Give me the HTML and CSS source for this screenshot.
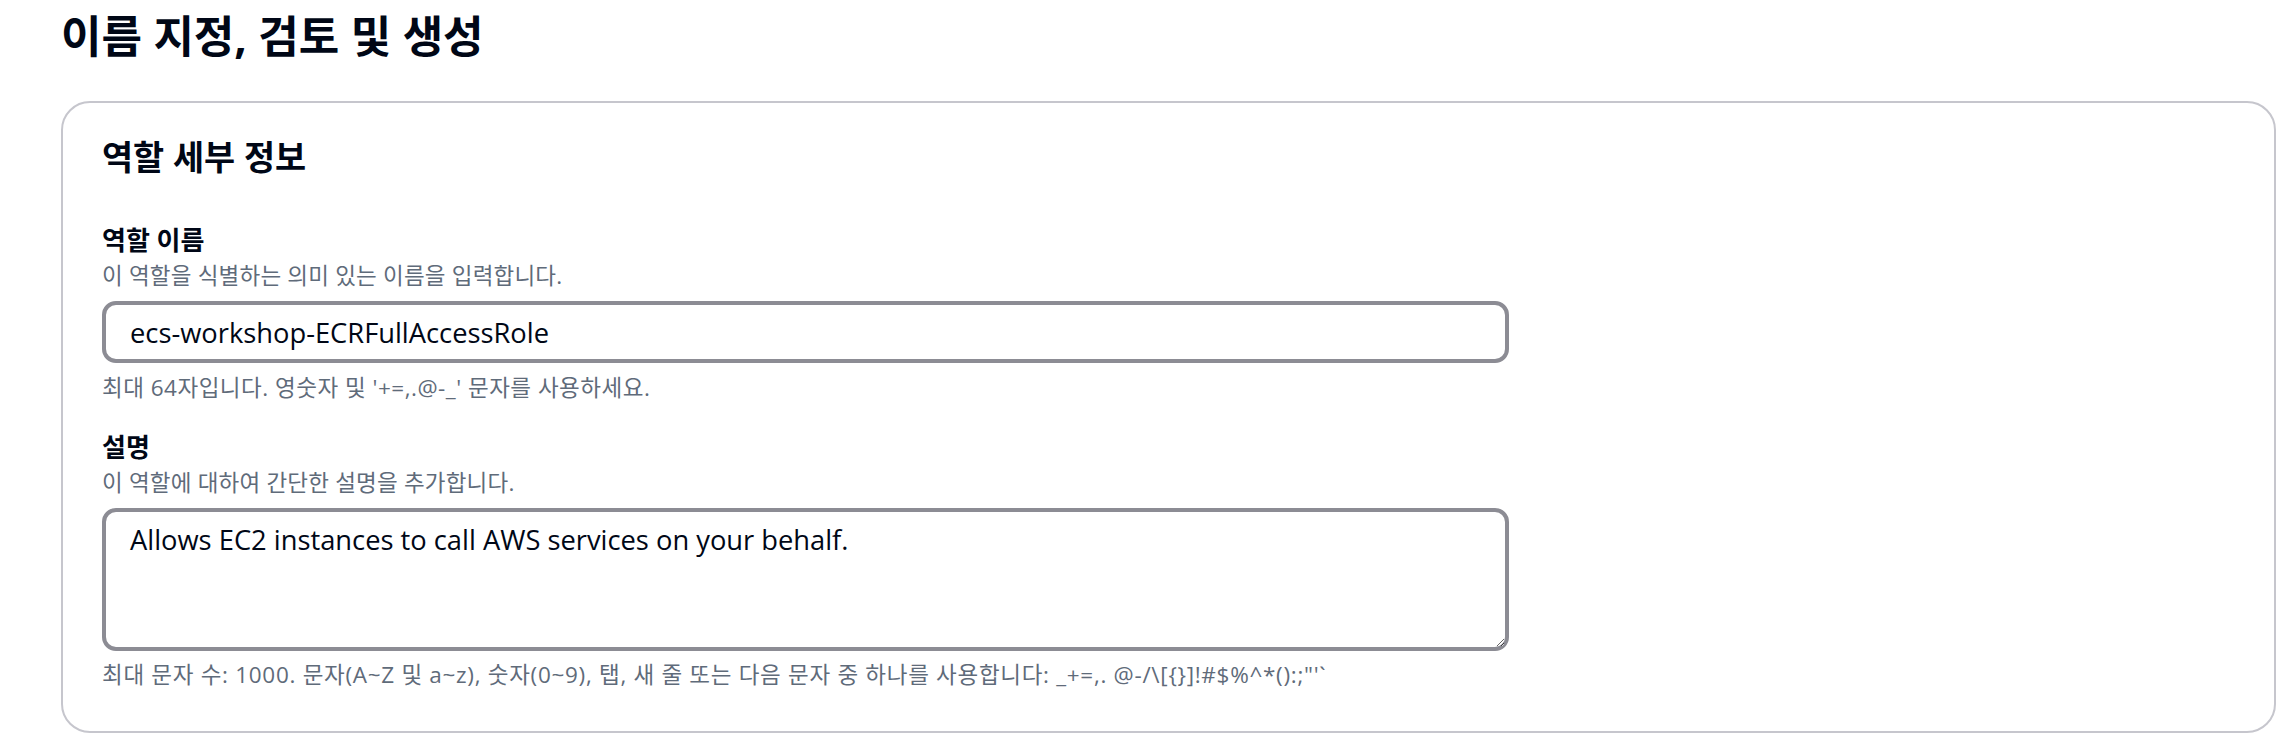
FILE: index.html
```html
<!DOCTYPE html>
<html lang="ko">
<head>
<meta charset="utf-8">
<title>이름 지정, 검토 및 생성</title>
<link rel="stylesheet" href="styles.css">
</head>
<body>
<main class="page">
  <h1 class="page-title">이름 지정, 검토 및 생성</h1>
  <section class="card">
    <h2 class="card-title">역할 세부 정보</h2>
    <div class="field field-name">
      <label class="field-label" for="role-name">역할 이름</label>
      <div class="field-desc">이 역할을 식별하는 의미 있는 이름을 입력합니다.</div>
      <input class="text-input" id="role-name" type="text" value="ecs-workshop-ECRFullAccessRole">
      <div class="field-hint">최대 64자입니다. 영숫자 및 '+=,.@-_' 문자를 사용하세요.</div>
    </div>
    <div class="field field-desc-block">
      <label class="field-label" for="role-desc">설명</label>
      <div class="field-desc">이 역할에 대하여 간단한 설명을 추가합니다.</div>
      <textarea class="text-area" id="role-desc">Allows EC2 instances to call AWS services on your behalf.</textarea>
      <div class="field-hint field-hint-long">최대 문자 수: 1000. 문자(A~Z 및 a~z), 숫자(0~9), 탭, 새 줄 또는 다음 문자 중 하나를 사용합니다: _+=,. @-/\[{}]!#$%^*():;"'`</div>
    </div>
  </section>
</main>
</body>
</html>
```

FILE: styles.css
```css
html, body {
  margin: 0;
  padding: 0;
  background: #ffffff;
}

.page {
  padding: 10px 2px 0 61px;
  font-family: "Open Sans", "Noto Sans CJK KR", sans-serif;
  color: #000716;
}

.page-title {
  margin: 0;
  font-size: 44px;
  line-height: 52px;
  font-weight: 700;
}

.card {
  margin-top: 39px;
  border: 2px solid #c6c6cd;
  border-radius: 29px;
  padding: 34px 39px 43px 39px;
  display: flex;
  flex-direction: column;
}

.card-title {
  margin: 0;
  font-size: 33.8px;
  line-height: 40px;
  font-weight: 700;
}

.field {
  display: flex;
  flex-direction: column;
}

.field-name {
  margin-top: 48px;
}

.field-desc-block {
  margin-top: 31px;
}

.field-label {
  font-size: 26px;
  line-height: 31px;
  font-weight: 700;
}

.field-desc {
  margin-top: 6px;
  font-size: 22.5px;
  line-height: 27px;
  letter-spacing: 0.2px;
  color: #5f6b7a;
}

.field-hint {
  margin-top: 11px;
  font-size: 22.5px;
  line-height: 27px;
  letter-spacing: 0.5px;
  color: #5f6b7a;
}

.field-hint-long {
  margin-top: 10px;
  letter-spacing: 0.7px;
}

.text-input,
.text-area {
  box-sizing: border-box;
  width: 1407px;
  margin: 12px 0 0 0;
  border: 4px solid #8c8c94;
  border-radius: 14px;
  background: #ffffff;
  color: #000716;
  font-family: "Open Sans", "Noto Sans", sans-serif;
  font-size: 27.3px;
  outline: none;
}

.text-input {
  height: 62px;
  padding: 0 24px;
}

.text-area {
  height: 143px;
  padding: 9px 24px;
  line-height: 38px;
  resize: vertical;
  display: block;
}
```
